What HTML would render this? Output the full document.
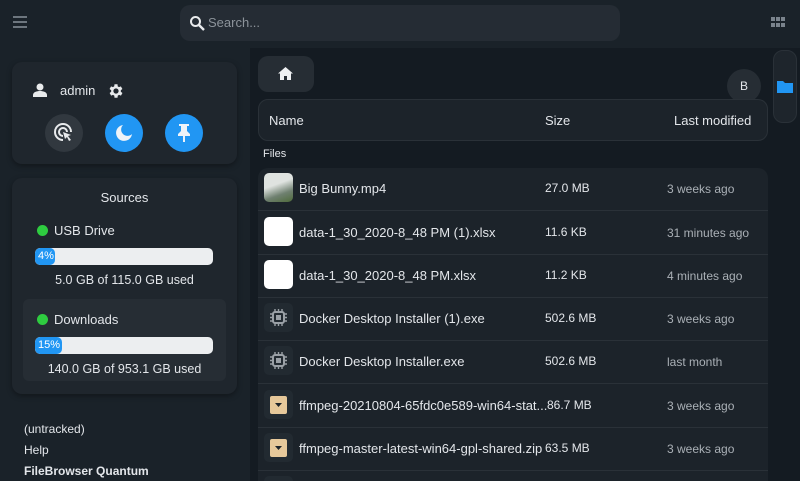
<!DOCTYPE html>
<html><head><meta charset="utf-8"><style>
*{box-sizing:border-box;margin:0;padding:0}
html,body{width:800px;height:481px;overflow:hidden}
body{background:#141b22;font-family:"Liberation Sans",sans-serif;color:#e3e6ea;position:relative;font-size:13px}
.hdr{position:absolute;left:0;top:0;width:800px;height:48px;background:#1a2229}
.search{position:absolute;left:180px;top:5px;width:440px;height:36px;border-radius:10px;background:#252c34;color:#8c939a;font-size:13px;line-height:36px;padding-left:28px}
.side{position:absolute;left:0;top:48px;width:250px;height:433px;background:#1a2229}
.card{position:absolute;background:#1f262d;border-radius:10px;box-shadow:0 2px 6px rgba(0,0,0,.35)}
.circ{position:absolute;width:38px;height:38px;border-radius:50%;background:#2196f3}
.bar{position:absolute;height:17px;background:#eceef0;border-radius:5px;overflow:hidden}
.bar span{display:block;height:100%;background:#2196f3;color:#fff;font-size:11px;line-height:17px;padding-left:3px;border-radius:5px}
.dot{position:absolute;width:11px;height:11px;border-radius:50%;background:#2ecc40}
.t{position:absolute;white-space:nowrap}
.list{position:absolute;left:258px;top:168px;width:510px;height:313px;background:#1c232a;border-radius:10px 10px 0 0;overflow:hidden}
.row{position:absolute;left:0;width:510px;height:43px;border-bottom:1px solid #2a3138}
.ic{position:absolute;left:6px;top:5px;width:29px;height:29px;border-radius:5px;background:#222a31}
.row .n{left:41px;top:13px;font-size:13px}
.row .s{left:287px;top:13px;font-size:12px}
.row .d{left:409px;top:14px;font-size:12px;color:#aab0b6}
</style></head><body>
<div class="hdr">
<div style="position:absolute;left:13px;top:16px;width:14px;height:2px;background:#6d767e;box-shadow:0 5px 0 #6d767e,0 10px 0 #6d767e"></div>
<div class="search">Search...</div>
<svg style="position:absolute;left:189px;top:15px" width="16" height="16" viewBox="0 0 16 16"><circle cx="6.5" cy="6.5" r="4.5" stroke="#e8eaec" stroke-width="2" fill="none"/><path d="M10 10l5 5" stroke="#e8eaec" stroke-width="2.4"/></svg>
<svg style="position:absolute;left:771px;top:17px" width="15" height="12"><g fill="#7a838c"><rect x="0" y="0" width="4" height="4"/><rect x="5" y="0" width="4" height="4"/><rect x="10" y="0" width="4" height="4"/><rect x="0" y="6" width="4" height="4"/><rect x="5" y="6" width="4" height="4"/><rect x="10" y="6" width="4" height="4"/></g></svg>
</div>
<div class="side">
<div class="card" style="left:12px;top:14px;width:225px;height:102px">
 <svg style="position:absolute;left:21px;top:21px" width="14" height="14" viewBox="0 0 14 14"><circle cx="7" cy="4" r="3.5" fill="#e8eaec"/><path d="M0 14v-2c0-3 4-4 7-4s7 1 7 4v2z" fill="#e8eaec"/></svg>
 <div class="t" style="left:48px;top:21px;font-size:13px">admin</div>
 <svg style="position:absolute;left:95px;top:20px" width="18" height="18" viewBox="0 0 24 24"><path fill="#e8eaec" d="M19.4 13a7.5 7.5 0 000-2l2.1-1.6-2-3.5-2.5 1a7 7 0 00-1.7-1L15 3h-4l-.4 2.9a7 7 0 00-1.7 1l-2.5-1-2 3.5L6.6 11a7.5 7.5 0 000 2l-2.1 1.6 2 3.5 2.5-1a7 7 0 001.7 1L11 21h4l.4-2.9a7 7 0 001.7-1l2.5 1 2-3.5zM13 15.5a3.5 3.5 0 110-7 3.5 3.5 0 010 7z" transform="translate(-1 0)"/></svg>
 <div class="circ" style="left:33px;top:52px;background:#31383f"></div>
 <svg style="position:absolute;left:42px;top:61px" width="20" height="20" viewBox="0 0 20 20"><path d="M9 17a8 8 0 118-8M9 13a4 4 0 114-4" stroke="#e8eaec" stroke-width="2" fill="none"/><path d="M9 9l8 3-3 1 3 4-2 1-2-4-2 2z" fill="#e8eaec"/></svg>
 <div class="circ" style="left:93px;top:52px"></div>
 <svg style="position:absolute;left:103px;top:62px" width="18" height="18" viewBox="0 0 18 18"><path d="M8 1a8 8 0 109 9A6 6 0 018 1z" fill="#eef3f8"/></svg>
 <div class="circ" style="left:153px;top:52px"></div>
 <svg style="position:absolute;left:163px;top:61px" width="18" height="20" viewBox="0 0 18 20"><path d="M4 1h10v2h-2v5l3 3v2H10v6H8v-6H3v-2l3-3V3H4z" fill="#eef3f8"/></svg>
</div>
<div class="card" style="left:12px;top:130px;width:225px;height:216px">
 <div class="t" style="left:0;width:225px;text-align:center;top:12px;font-size:13px">Sources</div>
 <div class="dot" style="left:25px;top:47px"></div>
 <div class="t" style="left:42px;top:45px">USB Drive</div>
 <div class="bar" style="left:23px;top:70px;width:178px"><span style="width:20px">4%</span></div>
 <div class="t" style="left:0;width:225px;text-align:center;top:95px;font-size:12.5px">5.0 GB of 115.0 GB used</div>
 <div style="position:absolute;left:11px;top:121px;width:203px;height:82px;background:#262d34;border-radius:6px"></div>
 <div class="dot" style="left:25px;top:136px"></div>
 <div class="t" style="left:42px;top:134px">Downloads</div>
 <div class="bar" style="left:23px;top:159px;width:178px"><span style="width:27px">15%</span></div>
 <div class="t" style="left:0;width:225px;text-align:center;top:184px;font-size:12.5px">140.0 GB of 953.1 GB used</div>
</div>
<div class="t" style="left:24px;top:374px;font-size:12px">(untracked)</div>
<div class="t" style="left:24px;top:395px;font-size:12px">Help</div>
<div class="t" style="left:24px;top:416px;font-size:12px;font-weight:bold">FileBrowser Quantum</div>
</div>
<div style="position:absolute;left:258px;top:56px;width:56px;height:36px;border-radius:10px;background:#262d34"></div>
<svg style="position:absolute;left:278px;top:67px" width="15" height="13" viewBox="0 0 15 13"><path d="M7.5 0L0 6.5h2V13h4V9h3v4h4V6.5h2z" fill="#eef0f2"/></svg>
<div style="position:absolute;left:727px;top:69px;width:34px;height:34px;border-radius:50%;background:#262d34;color:#e3e6ea;text-align:center;line-height:34px;font-size:12px">B</div>
<div style="position:absolute;left:258px;top:99px;width:510px;height:42px;border-radius:10px;background:#1c232a;border:1px solid #2a3138"></div>
<div class="t" style="left:269px;top:113px">Name</div>
<div class="t" style="left:545px;top:113px">Size</div>
<div class="t" style="left:674px;top:113px">Last modified</div>
<div style="position:absolute;left:773px;top:50px;width:24px;height:73px;border-radius:10px;background:#1e252c;border:1px solid #2a3138"></div>
<svg style="position:absolute;left:777px;top:80px" width="16" height="13"><path d="M0 1h6l2 2h8v10H0z" fill="#2196f3"/></svg>
<div class="t" style="left:263px;top:148px;font-size:11px">Files</div>
<div class="list">
 <div class="row" style="top:0"><div class="ic" style="background:linear-gradient(160deg,#dfe3e0 40%,#6f8070 70%,#4e6a3a)"></div><div class="t n">Big Bunny.mp4</div><div class="t s">27.0 MB</div><div class="t d">3 weeks ago</div></div>
 <div class="row" style="top:44px"><div class="ic" style="background:#fff"></div><div class="t n">data-1_30_2020-8_48 PM (1).xlsx</div><div class="t s">11.6 KB</div><div class="t d">31 minutes ago</div></div>
 <div class="row" style="top:87px"><div class="ic" style="background:#fff"></div><div class="t n">data-1_30_2020-8_48 PM.xlsx</div><div class="t s">11.2 KB</div><div class="t d">4 minutes ago</div></div>
 <div class="row" style="top:130px"><div class="ic"><svg width="29" height="29"><rect x="9" y="9" width="11" height="11" rx="2" stroke="#9aa0a6" stroke-width="2" fill="none"/><rect x="12" y="12" width="5" height="5" fill="#9aa0a6"/><path d="M11 6v3M14.5 6v3M18 6v3M11 20v3M14.5 20v3M18 20v3M6 11h3M6 14.5h3M6 18h3M20 11h3M20 14.5h3M20 18h3" stroke="#9aa0a6" stroke-width="1.4"/></svg></div><div class="t n">Docker Desktop Installer (1).exe</div><div class="t s">502.6 MB</div><div class="t d">3 weeks ago</div></div>
 <div class="row" style="top:173px"><div class="ic"><svg width="29" height="29"><rect x="9" y="9" width="11" height="11" rx="2" stroke="#9aa0a6" stroke-width="2" fill="none"/><rect x="12" y="12" width="5" height="5" fill="#9aa0a6"/><path d="M11 6v3M14.5 6v3M18 6v3M11 20v3M14.5 20v3M18 20v3M6 11h3M6 14.5h3M6 18h3M20 11h3M20 14.5h3M20 18h3" stroke="#9aa0a6" stroke-width="1.4"/></svg></div><div class="t n">Docker Desktop Installer.exe</div><div class="t s">502.6 MB</div><div class="t d">last month</div></div>
 <div class="row" style="top:217px"><div class="ic"><svg width="29" height="29"><rect x="6" y="6" width="17" height="18" rx="2" fill="#e6c89a"/><path d="M11 13h7l-3.5 4z" fill="#1c232a"/></svg></div><div class="t n">ffmpeg-20210804-65fdc0e589-win64-stat...</div><div class="t s" style="left:289px">86.7 MB</div><div class="t d">3 weeks ago</div></div>
 <div class="row" style="top:260px"><div class="ic"><svg width="29" height="29"><rect x="6" y="6" width="17" height="18" rx="2" fill="#e6c89a"/><path d="M11 13h7l-3.5 4z" fill="#1c232a"/></svg></div><div class="t n">ffmpeg-master-latest-win64-gpl-shared.zip</div><div class="t s">63.5 MB</div><div class="t d">3 weeks ago</div></div>
 <div class="row" style="top:303px"><div class="ic"></div></div>
</div>
</body></html>
